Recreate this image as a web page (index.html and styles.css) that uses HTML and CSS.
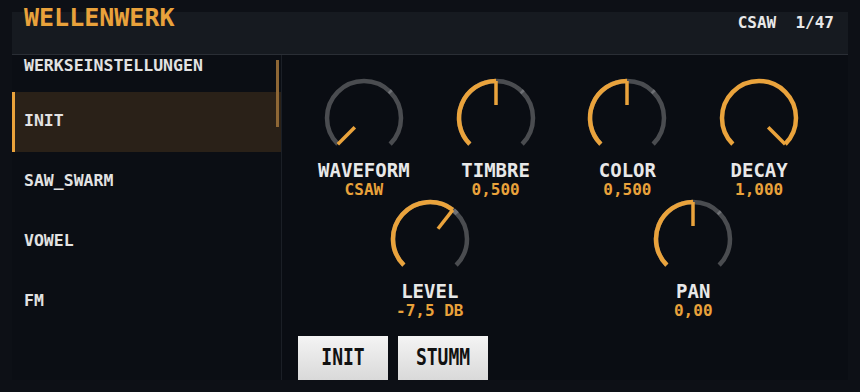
FILE: index.html
```html
<!DOCTYPE html>
<html>
<head>
<meta charset="utf-8">
<link rel="stylesheet" href="styles.css">
</head>
<body>
<div class="app">
  <header class="header">
    <div class="title">WELLENWERK</div>
    <div class="info">CSAW  1/47</div>
  </header>
  <div class="main">
    <aside class="sidebar">
      <ul class="list">
        <li class="item first">WERKSEINSTELLUNGEN</li>
        <li class="item selected">INIT</li>
        <li class="item">SAW_SWARM</li>
        <li class="item">VOWEL</li>
        <li class="item">FM</li>
      </ul>
      <div class="thumb"></div>
    </aside>
    <section class="content">
      <div class="row">
        <div class="knob">
          <svg class="dial" width="84" height="84" viewBox="0 0 84 84">
            <path class="track" d="M15.84 68.16 A37 37 0 1 1 68.16 68.16"/>
            <path class="tick" d="M67.23 14.95 A37 37 0 0 1 69.06 16.77"/>
            <line class="ptr" x1="32.81" y1="51.19" x2="15.84" y2="68.16"/>
          </svg>
          <div class="label">WAVEFORM</div>
          <div class="value">CSAW</div>
        </div>
        <div class="knob">
          <svg class="dial" width="84" height="84" viewBox="0 0 84 84">
            <path class="track" d="M15.84 68.16 A37 37 0 1 1 68.16 68.16"/>
            <path class="tick" d="M67.23 14.95 A37 37 0 0 1 69.06 16.77"/>
            <path class="fill" d="M15.84 68.16 A37 37 0 0 1 42 5"/>
            <line class="ptr" x1="42" y1="29" x2="42" y2="5"/>
          </svg>
          <div class="label">TIMBRE</div>
          <div class="value">0,500</div>
        </div>
        <div class="knob">
          <svg class="dial" width="84" height="84" viewBox="0 0 84 84">
            <path class="track" d="M15.84 68.16 A37 37 0 1 1 68.16 68.16"/>
            <path class="tick" d="M67.23 14.95 A37 37 0 0 1 69.06 16.77"/>
            <path class="fill" d="M15.84 68.16 A37 37 0 0 1 42 5"/>
            <line class="ptr" x1="42" y1="29" x2="42" y2="5"/>
          </svg>
          <div class="label">COLOR</div>
          <div class="value">0,500</div>
        </div>
        <div class="knob">
          <svg class="dial" width="84" height="84" viewBox="0 0 84 84">
            <path class="fill" d="M15.84 68.16 A37 37 0 1 1 68.16 68.16"/>
            <line class="ptr" x1="51.19" y1="51.19" x2="68.16" y2="68.16"/>
          </svg>
          <div class="label">DECAY</div>
          <div class="value">1,000</div>
        </div>
      </div>
      <div class="row row2">
        <div class="knob">
          <svg class="dial" width="84" height="84" viewBox="0 0 84 84">
            <path class="track" d="M15.84 68.16 A37 37 0 1 1 68.16 68.16"/>
            <path class="tick" d="M65.5 13.2 A37 37 0 0 1 69.06 16.77"/>
            <path class="fill" d="M15.84 68.16 A37 37 0 0 1 64.78 12.84"/>
            <line class="ptr" x1="50.0" y1="31.76" x2="64.78" y2="12.84"/>
          </svg>
          <div class="label">LEVEL</div>
          <div class="value">-7,5 DB</div>
        </div>
        <div class="knob">
          <svg class="dial" width="84" height="84" viewBox="0 0 84 84">
            <path class="track" d="M15.84 68.16 A37 37 0 1 1 68.16 68.16"/>
            <path class="tick" d="M67.23 14.95 A37 37 0 0 1 69.06 16.77"/>
            <path class="fill" d="M15.84 68.16 A37 37 0 0 1 42 5"/>
            <line class="ptr" x1="42" y1="29" x2="42" y2="5"/>
          </svg>
          <div class="label">PAN</div>
          <div class="value">0,00</div>
        </div>
      </div>
      <div class="buttons">
        <button class="btn"><span class="btn-text">INIT</span></button>
        <button class="btn"><span class="btn-text">STUMM</span></button>
      </div>
    </section>
  </div>
</div>
</body>
</html>
```
FILE: styles.css
```css
html, body {
  margin: 0;
  padding: 0;
}
body {
  width: 860px;
  height: 392px;
  overflow: hidden;
  background: #0d1016;
  font-family: "DejaVu Sans Mono", "Liberation Mono", monospace;
  font-weight: bold;
}
.app {
  width: 836px;
  margin-left: 12px;
  padding-top: 12px;
}
.header {
  height: 42px;
  background: #161a20;
  border-bottom: 1px solid #2a2e35;
  display: flex;
  justify-content: space-between;
  align-items: flex-start;
}
.title {
  font-size: 25px;
  line-height: 29px;
  margin-top: -9px;
  padding-left: 12px;
  color: #e9a23b;
}
.info {
  font-size: 16px;
  line-height: 19px;
  color: #e8e8e8;
  white-space: pre;
  padding-right: 14px;
  margin-top: 1px;
}
.main {
  display: flex;
  height: 325px;
  background: #0a0d13;
}
.sidebar {
  position: relative;
  width: 269px;
  border-right: 1px solid #1b1f26;
  overflow: hidden;
  background: #0b0e14;
}
.list {
  list-style: none;
  margin: 0;
  padding: 0;
}
.item {
  height: 60px;
  display: flex;
  align-items: center;
  padding-left: 12px;
  padding-bottom: 3px;
  font-size: 16.5px;
  color: #e2e2e2;
  box-sizing: border-box;
}
.item.first {
  height: 37px;
  align-items: flex-start;
  padding-top: 1px;
  padding-bottom: 0;
}
.item.selected {
  background: #2a2118;
  border-left: 3px solid #e9a23b;
  padding-left: 9px;
}
.thumb {
  position: absolute;
  right: 2px;
  top: 5px;
  width: 3px;
  height: 67px;
  background: #8e6735;
}
.content {
  flex: 1;
  padding: 21px 23px 0 16px;
}
.row {
  display: flex;
}
.row2 {
  margin-top: -1px;
}
.knob {
  flex: 1;
  display: flex;
  flex-direction: column;
  align-items: center;
}
.dial {
  display: block;
}
.track {
  fill: none;
  stroke: #4a4c50;
  stroke-width: 4.5;
}
.tick {
  fill: none;
  stroke: #6e7075;
  stroke-width: 4.5;
}
.fill {
  fill: none;
  stroke: #eaa33c;
  stroke-width: 4.5;
}
.ptr {
  stroke: #eaa33c;
  stroke-width: 3.5;
}
.label {
  font-size: 19px;
  line-height: 20px;
  color: #e8e8e8;
}
.value {
  font-size: 16px;
  line-height: 16.5px;
  margin-top: 1.5px;
  color: #e9a23b;
}
.buttons {
  display: flex;
  gap: 10px;
  margin-top: 17px;
}
.btn {
  width: 90px;
  height: 44px;
  border: none;
  padding: 0;
  margin: 0;
  background: linear-gradient(#f4f4f4, #d9d9d9);
  font-family: "DejaVu Sans Mono", "Liberation Mono", monospace;
  font-weight: bold;
  font-size: 18px;
  color: #111;
  display: flex;
  align-items: center;
  justify-content: center;
}
.btn-text {
  display: inline-block;
  transform: scaleY(1.25);
  margin-top: -3px;
}
```
